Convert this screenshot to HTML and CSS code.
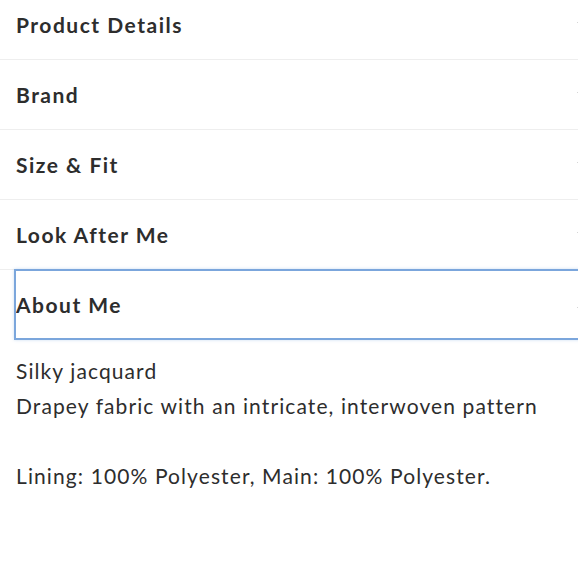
FILE: index.html
```html
<!DOCTYPE html>
<html lang="en">
<head>
<meta charset="utf-8">
<title>Product accordion</title>
<link rel="stylesheet" href="styles.css">
</head>
<body>
<div class="accordion">
  <div class="item">
    <button class="head" type="button"><span class="label">Product Details</span><svg class="chev" width="12" height="8" viewBox="0 0 12 8"><path d="M1 1l5 5 5-5" fill="none" stroke="#666" stroke-width="1.5"/></svg></button>
  </div>
  <div class="item">
    <button class="head" type="button"><span class="label">Brand</span><svg class="chev" width="12" height="8" viewBox="0 0 12 8"><path d="M1 1l5 5 5-5" fill="none" stroke="#666" stroke-width="1.5"/></svg></button>
  </div>
  <div class="item">
    <button class="head" type="button"><span class="label">Size &amp; Fit</span><svg class="chev" width="12" height="8" viewBox="0 0 12 8"><path d="M1 1l5 5 5-5" fill="none" stroke="#666" stroke-width="1.5"/></svg></button>
  </div>
  <div class="item">
    <button class="head" type="button"><span class="label">Look After Me</span><svg class="chev" width="12" height="8" viewBox="0 0 12 8"><path d="M1 1l5 5 5-5" fill="none" stroke="#666" stroke-width="1.5"/></svg></button>
  </div>
  <div class="item open">
    <button class="head focused" type="button"><span class="label">About Me</span><svg class="chev" width="12" height="8" viewBox="0 0 12 8"><path d="M1 7l5-5 5 5" fill="none" stroke="#666" stroke-width="1.5"/></svg></button>
    <div class="panel">
      <p>Silky jacquard<br>Drapey fabric with an intricate, interwoven pattern</p>
      <p>Lining: 100% Polyester, Main: 100% Polyester.</p>
    </div>
  </div>
</div>
</body>
</html>
```
FILE: styles.css
```css
html, body {
  margin: 0;
  padding: 0;
  overflow: hidden;
  background: #fff;
}
body {
  font-family: "Lato", "Liberation Sans", sans-serif;
  color: #2d2d2d;
}
.accordion {
  margin-top: -10px;
}
.item {
  border-bottom: 1px solid #eeeeee;
}
.item.open {
  border-bottom: none;
}
.head {
  display: flex;
  align-items: center;
  justify-content: space-between;
  box-sizing: border-box;
  width: 573px;
  height: 67px;
  margin: 1px 0 1px 16px;
  padding: 0;
  border: none;
  background: #fff;
  font-family: inherit;
  color: #2d2d2d;
  text-align: left;
  cursor: pointer;
}
.label {
  font-size: 21px;
  font-weight: 700;
  letter-spacing: 1.5px;
}
.chev {
  flex: none;
}
.focused {
  outline: 2px solid #7ba6dc;
  box-shadow: 0 0 3px 2px rgba(130, 172, 224, 0.4);
}
.panel {
  padding: 14px 16px 0 16px;
  font-size: 21px;
  line-height: 35px;
  letter-spacing: 1.1px;
}
.panel p {
  margin: 0 0 35px 0;
}
```
